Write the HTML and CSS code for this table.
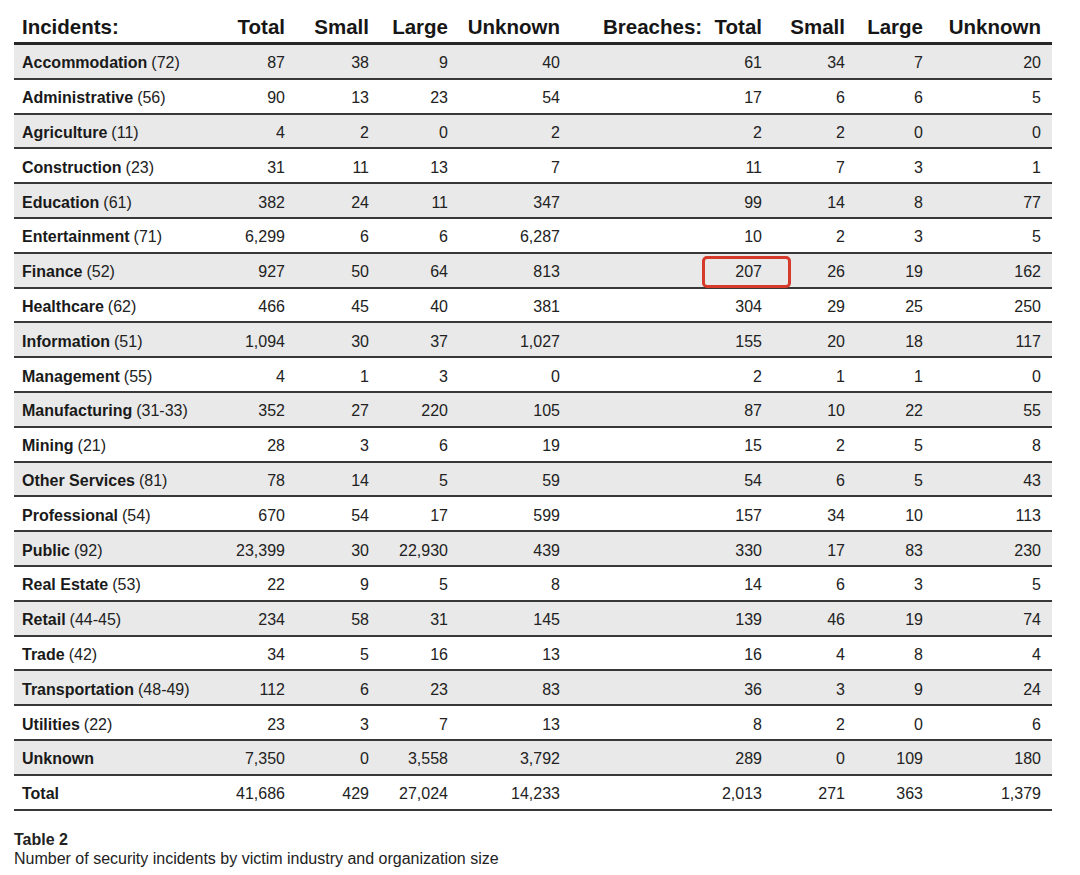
FILE: index.html
```html
<!DOCTYPE html>
<html>
<head>
<meta charset="utf-8">
<link rel="stylesheet" href="styles.css">
</head>
<body>
<div class="page">
  <div class="table">
    <div class="row head">
      <div class="lbl">Incidents:</div><div class="num">Total</div><div class="num">Small</div><div class="num">Large</div><div class="num">Unknown</div>
      <div class="blbl">Breaches:</div><div class="num">Total</div><div class="num">Small</div><div class="num">Large</div><div class="num">Unknown</div>
    </div>
    <div class="row g"><div class="lbl"><b>Accommodation</b> (72)</div><div class="num">87</div><div class="num">38</div><div class="num">9</div><div class="num">40</div><div></div><div class="num">61</div><div class="num">34</div><div class="num">7</div><div class="num">20</div></div>
    <div class="row"><div class="lbl"><b>Administrative</b> (56)</div><div class="num">90</div><div class="num">13</div><div class="num">23</div><div class="num">54</div><div></div><div class="num">17</div><div class="num">6</div><div class="num">6</div><div class="num">5</div></div>
    <div class="row g"><div class="lbl"><b>Agriculture</b> (11)</div><div class="num">4</div><div class="num">2</div><div class="num">0</div><div class="num">2</div><div></div><div class="num">2</div><div class="num">2</div><div class="num">0</div><div class="num">0</div></div>
    <div class="row"><div class="lbl"><b>Construction</b> (23)</div><div class="num">31</div><div class="num">11</div><div class="num">13</div><div class="num">7</div><div></div><div class="num">11</div><div class="num">7</div><div class="num">3</div><div class="num">1</div></div>
    <div class="row g"><div class="lbl"><b>Education</b> (61)</div><div class="num">382</div><div class="num">24</div><div class="num">11</div><div class="num">347</div><div></div><div class="num">99</div><div class="num">14</div><div class="num">8</div><div class="num">77</div></div>
    <div class="row"><div class="lbl"><b>Entertainment</b> (71)</div><div class="num">6,299</div><div class="num">6</div><div class="num">6</div><div class="num">6,287</div><div></div><div class="num">10</div><div class="num">2</div><div class="num">3</div><div class="num">5</div></div>
    <div class="row g"><div class="lbl"><b>Finance</b> (52)</div><div class="num">927</div><div class="num">50</div><div class="num">64</div><div class="num">813</div><div></div><div class="num mark">207<span class="ring"></span></div><div class="num">26</div><div class="num">19</div><div class="num">162</div></div>
    <div class="row"><div class="lbl"><b>Healthcare</b> (62)</div><div class="num">466</div><div class="num">45</div><div class="num">40</div><div class="num">381</div><div></div><div class="num">304</div><div class="num">29</div><div class="num">25</div><div class="num">250</div></div>
    <div class="row g"><div class="lbl"><b>Information</b> (51)</div><div class="num">1,094</div><div class="num">30</div><div class="num">37</div><div class="num">1,027</div><div></div><div class="num">155</div><div class="num">20</div><div class="num">18</div><div class="num">117</div></div>
    <div class="row"><div class="lbl"><b>Management</b> (55)</div><div class="num">4</div><div class="num">1</div><div class="num">3</div><div class="num">0</div><div></div><div class="num">2</div><div class="num">1</div><div class="num">1</div><div class="num">0</div></div>
    <div class="row g"><div class="lbl"><b>Manufacturing</b> (31-33)</div><div class="num">352</div><div class="num">27</div><div class="num">220</div><div class="num">105</div><div></div><div class="num">87</div><div class="num">10</div><div class="num">22</div><div class="num">55</div></div>
    <div class="row"><div class="lbl"><b>Mining</b> (21)</div><div class="num">28</div><div class="num">3</div><div class="num">6</div><div class="num">19</div><div></div><div class="num">15</div><div class="num">2</div><div class="num">5</div><div class="num">8</div></div>
    <div class="row g"><div class="lbl"><b>Other Services</b> (81)</div><div class="num">78</div><div class="num">14</div><div class="num">5</div><div class="num">59</div><div></div><div class="num">54</div><div class="num">6</div><div class="num">5</div><div class="num">43</div></div>
    <div class="row"><div class="lbl"><b>Professional</b> (54)</div><div class="num">670</div><div class="num">54</div><div class="num">17</div><div class="num">599</div><div></div><div class="num">157</div><div class="num">34</div><div class="num">10</div><div class="num">113</div></div>
    <div class="row g"><div class="lbl"><b>Public</b> (92)</div><div class="num">23,399</div><div class="num">30</div><div class="num">22,930</div><div class="num">439</div><div></div><div class="num">330</div><div class="num">17</div><div class="num">83</div><div class="num">230</div></div>
    <div class="row"><div class="lbl"><b>Real Estate</b> (53)</div><div class="num">22</div><div class="num">9</div><div class="num">5</div><div class="num">8</div><div></div><div class="num">14</div><div class="num">6</div><div class="num">3</div><div class="num">5</div></div>
    <div class="row g"><div class="lbl"><b>Retail</b> (44-45)</div><div class="num">234</div><div class="num">58</div><div class="num">31</div><div class="num">145</div><div></div><div class="num">139</div><div class="num">46</div><div class="num">19</div><div class="num">74</div></div>
    <div class="row"><div class="lbl"><b>Trade</b> (42)</div><div class="num">34</div><div class="num">5</div><div class="num">16</div><div class="num">13</div><div></div><div class="num">16</div><div class="num">4</div><div class="num">8</div><div class="num">4</div></div>
    <div class="row g"><div class="lbl"><b>Transportation</b> (48-49)</div><div class="num">112</div><div class="num">6</div><div class="num">23</div><div class="num">83</div><div></div><div class="num">36</div><div class="num">3</div><div class="num">9</div><div class="num">24</div></div>
    <div class="row"><div class="lbl"><b>Utilities</b> (22)</div><div class="num">23</div><div class="num">3</div><div class="num">7</div><div class="num">13</div><div></div><div class="num">8</div><div class="num">2</div><div class="num">0</div><div class="num">6</div></div>
    <div class="row g"><div class="lbl"><b>Unknown</b></div><div class="num">7,350</div><div class="num">0</div><div class="num">3,558</div><div class="num">3,792</div><div></div><div class="num">289</div><div class="num">0</div><div class="num">109</div><div class="num">180</div></div>
    <div class="row"><div class="lbl"><b>Total</b></div><div class="num">41,686</div><div class="num">429</div><div class="num">27,024</div><div class="num">14,233</div><div></div><div class="num">2,013</div><div class="num">271</div><div class="num">363</div><div class="num">1,379</div></div>
  </div>
  <div class="caption">
    <div class="cap-title">Table 2</div>
    <div class="cap-text">Number of security incidents by victim industry and organization size</div>
  </div>
</div>
</body>
</html>
```

FILE: styles.css
```css
html, body {
  margin: 0;
  padding: 0;
  background: #ffffff;
}
body {
  font-family: "Liberation Sans", Arial, sans-serif;
  color: #222222;
}
.page {
  padding: 0 28px 0 14px;
}
.table {
  width: 1038px;
}
.row {
  display: grid;
  grid-template-columns: 186px 85px 84px 79px 112px 140px 62px 83px 78px 118px 11px;
  align-items: stretch;
  height: 34.8px;
  box-sizing: border-box;
  border-bottom: 2px solid #383838;
  font-size: 16px;
}
.row > div {
  display: flex;
  align-items: center;
  padding-top: 4px;
  box-sizing: border-box;
}
.row.g {
  background: #e9e9e9;
}
.row.head {
  height: 45px;
  border-bottom: 3px solid #262626;
  font-size: 20.5px;
  font-weight: bold;
  color: #161616;
}
.row.head > div {
  align-items: flex-end;
  padding-top: 0;
  padding-bottom: 3px;
}
.lbl {
  padding-left: 8px;
  white-space: nowrap;
}
.lbl b {
  color: #1a1a1a;
  margin-right: 4px;
}
.blbl {
  padding-left: 43px;
  white-space: nowrap;
}
.num {
  justify-content: flex-end;
  white-space: nowrap;
}
.mark {
  position: relative;
}
.ring {
  position: absolute;
  left: 2px;
  top: 2px;
  width: 89px;
  height: 32px;
  box-sizing: border-box;
  border: 3px solid #d63a2a;
  border-radius: 5px;
}
.caption {
  margin-top: 19px;
  font-size: 16px;
  line-height: 19px;
  color: #222222;
}
.cap-title {
  font-weight: bold;
}
```
